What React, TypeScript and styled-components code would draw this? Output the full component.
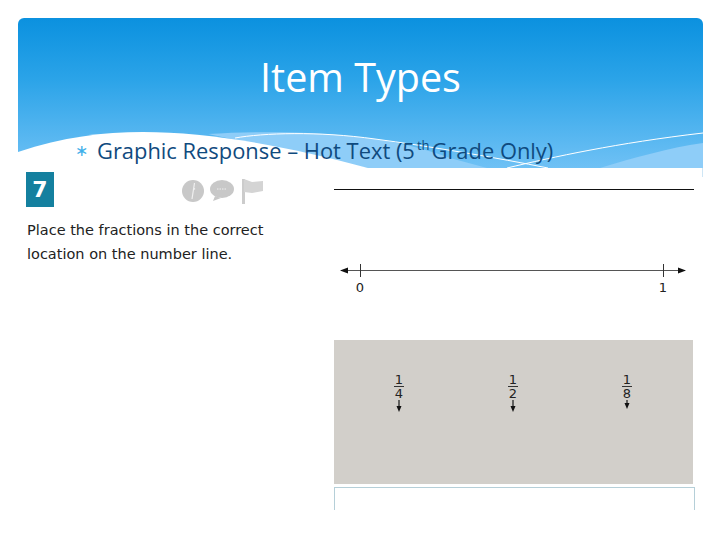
import styled, { createGlobalStyle } from "styled-components";

const GlobalStyle = createGlobalStyle`
  html, body {
    margin: 0;
    padding: 0;
    background: #ffffff;
  }
`;

const Page = styled.div`
  width: 720px;
  height: 540px;
  padding: 18px 17px 0 18px;
  box-sizing: border-box;
  overflow: hidden;
  font-family: "Open Sans", sans-serif;
`;

const Header = styled.header`
  position: relative;
  height: 150px;
  border-radius: 6px 6px 0 0;
  overflow: hidden;
  background: linear-gradient(180deg, #0b91df 0%, #2aa3e8 40%, #6fc1f5 100%);
`;

const Wave = styled.svg`
  position: absolute;
  left: 0;
  top: 0;
`;

const Title = styled.h1`
  position: relative;
  margin: 0;
  padding-top: 33px;
  height: 118px;
  box-sizing: border-box;
  text-align: center;
  font-size: 39.5px;
  line-height: 52px;
  font-weight: 400;
  color: #ffffff;
`;

const Bullet = styled.div`
  position: relative;
  display: flex;
  align-items: center;
  gap: 9px;
  padding-left: 57px;
  height: 28px;
  font-size: 21.9px;
  color: #0f4a7e;
  white-space: nowrap;
`;

const Star = styled.span`
  color: #3fb0ea;
  font-size: 16px;
`;

const Sup = styled.sup`
  font-size: 13px;
  line-height: 0;
  margin: 0 2px;
`;

const Worksheet = styled.section`
  position: relative;
  display: grid;
  grid-template-columns: 316px 361px;
  height: 342px;
  overflow: hidden;

  &::after {
    content: "";
    position: absolute;
    top: 0;
    right: 0;
    width: 1px;
    height: 9px;
    background: #cfe6f5;
  }
`;

const QuestionColumn = styled.div`
  padding: 4px 0 0 8px;
`;

const QuestionTop = styled.div`
  display: flex;
  align-items: center;
  gap: 128px;
`;

const NumberBadge = styled.div`
  width: 28px;
  height: 35px;
  display: flex;
  align-items: center;
  justify-content: center;
  background: #14809f;
  color: #ffffff;
  font-family: "DejaVu Sans", sans-serif;
  font-size: 22px;
  font-weight: 700;
`;

const Tools = styled.svg`
  display: block;
  margin-top: 5px;
  filter: blur(0.4px);
`;

const Prompt = styled.p`
  margin: 11px 0 0 1px;
  font-family: "DejaVu Sans", sans-serif;
  font-size: 14.5px;
  line-height: 24px;
  color: #222222;
  white-space: nowrap;
`;

const AnswerColumn = styled.div`
  padding-top: 21px;
  display: flex;
  flex-direction: column;
`;

const Rule = styled.div`
  width: 360px;
  height: 1px;
  flex: none;
  background: #111111;
`;

const NumberLine = styled.svg`
  display: block;
  flex: none;
  margin-top: 74px;
`;

const Tray = styled.div`
  width: 359px;
  height: 144px;
  flex: none;
  margin-top: 40px;
  box-sizing: border-box;
  padding: 33px 9px 0 8px;
  display: grid;
  grid-template-columns: repeat(3, 1fr);
  align-items: start;
  background: #d2cfca;
`;

const Chip = styled.div`
  display: flex;
  flex-direction: column;
  align-items: center;
  font-family: "DejaVu Sans", sans-serif;
  font-size: 13px;
  line-height: 13px;
  color: #222222;
`;

const Numerator = styled.span`
  padding: 0 1px;
  border-bottom: 1px solid #333333;
`;

const Arrow = styled.svg`
  display: block;
`;

const AnswerBox = styled.div`
  width: 361px;
  height: 30px;
  flex: none;
  margin-top: 3px;
  box-sizing: border-box;
  border: 1px solid #b5cfd8;
  border-bottom: none;
`;

const chips = [
  { top: "1", bottom: "4", stem: 6 },
  { top: "1", bottom: "2", stem: 6 },
  { top: "1", bottom: "8", stem: 3 },
];

export default function App() {
  return (
    <Page>
      <GlobalStyle />
      <Header>
        <Wave width="685" height="150" viewBox="0 0 685 150">
          <path
            d="M190 116 C240 113 300 113 357 121 C385 125 410 132 432 140 L469 150 L350 150 Z"
            fill="#8ecdf8"
          />
          <path
            d="M582 150 C615 140 650 130 685 125 L685 150 Z"
            fill="#8ecdf8"
          />
          <path
            d="M0 134 C45 119 85 114 125 114 C190 114 270 128 350 150 L0 150 Z"
            fill="#ffffff"
          />
          <path
            d="M217 120 C245 115 300 113 357 121 C410 128 480 140 530 150"
            fill="none"
            stroke="#ffffff"
            strokeWidth="1"
          />
          <path
            d="M489 150 C535 139 599 125 685 115"
            fill="none"
            stroke="#ffffff"
            strokeWidth="1"
          />
        </Wave>
        <Title>Item Types</Title>
        <Bullet>
          <Star>∗</Star>
          <span>
            Graphic Response – Hot Text (5<Sup>th</Sup>Grade Only)
          </span>
        </Bullet>
      </Header>
      <Worksheet>
        <QuestionColumn>
          <QuestionTop>
            <NumberBadge>7</NumberBadge>
            <Tools width="84" height="26" viewBox="0 0 84 26">
              <circle cx="11" cy="12" r="11" fill="#c8c8c8" />
              <path d="M12.5 4 L10 20 M11 11 L13 9.5" fill="none" stroke="#f0f0f0" strokeWidth="1.2" />
              <ellipse cx="40" cy="10" rx="12" ry="9" fill="#c8c8c8" />
              <path d="M33 17 L31 22 L39 19 Z" fill="#c8c8c8" />
              <path d="M35 10 H45" stroke="#efefef" strokeWidth="1" strokeDasharray="1.5 1" />
              <rect x="60" y="0" width="3" height="25" fill="#cccccc" />
              <path d="M62 0 L70 3 L81 2 L81 12 L70 14 L62 13 Z" fill="#d4d4d4" />
            </Tools>
          </QuestionTop>
          <Prompt>
            Place the fractions in the correct
            <br />
            location on the number line.
          </Prompt>
        </QuestionColumn>
        <AnswerColumn>
          <Rule />
          <NumberLine width="360" height="36" viewBox="0 0 360 36">
            <path d="M8 6.5 H350" stroke="#555555" strokeWidth="1" />
            <path d="M6 6.5 L14 3.5 V9.5 Z M352 6.5 L344 3.5 V9.5 Z" fill="#111111" />
            <path d="M26.5 0 V13 M329.5 0 V13" stroke="#333333" strokeWidth="1" />
            <text x="26" y="27.5" textAnchor="middle" fontFamily="DejaVu Sans" fontSize="13" fill="#222222">0</text>
            <text x="329" y="27.5" textAnchor="middle" fontFamily="DejaVu Sans" fontSize="13" fill="#222222">1</text>
          </NumberLine>
          <Tray>
            {chips.map((chip, i) => (
              <Chip key={i}>
                <Numerator>{chip.top}</Numerator>
                <span>{chip.bottom}</span>
                <Arrow width="6" height={chip.stem + 6} viewBox={`0 0 6 ${chip.stem + 6}`}>
                  <path d={`M3 0 V${chip.stem}`} stroke="#333333" strokeWidth="1.4" />
                  <path d={`M0.5 ${chip.stem} H5.5 L3 ${chip.stem + 6} Z`} fill="#111111" />
                </Arrow>
              </Chip>
            ))}
          </Tray>
          <AnswerBox />
        </AnswerColumn>
      </Worksheet>
    </Page>
  );
}
